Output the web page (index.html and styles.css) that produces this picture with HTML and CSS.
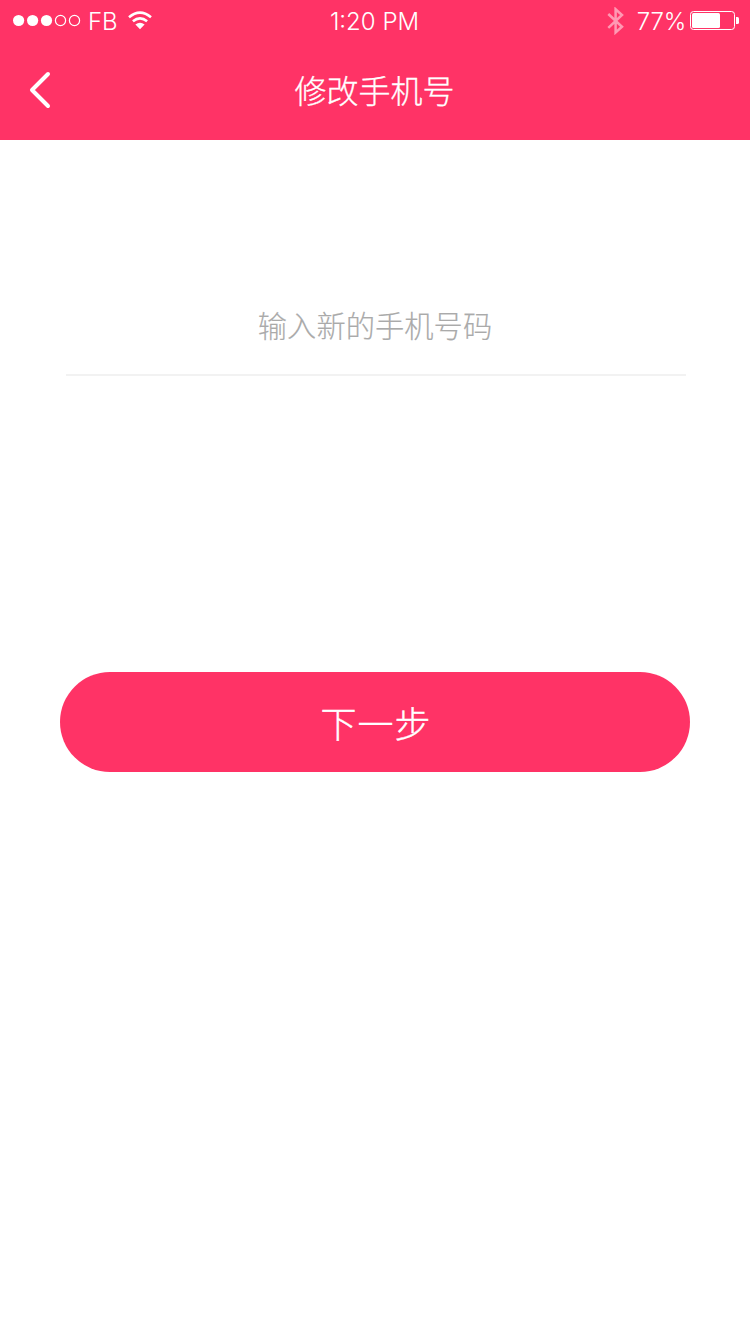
FILE: index.html
```html
<!DOCTYPE html>
<html lang="zh-CN">
<head>
<meta charset="utf-8">
<title>修改手机号</title>
<link rel="stylesheet" href="styles.css">
</head>
<body>
<header class="header">
  <div class="status">
    <div class="status-left">
      <svg class="signal" width="68" height="13" viewBox="0 0 68 13">
        <g fill="#fff"><circle cx="5.6" cy="6.5" r="5.6"/><circle cx="19.6" cy="6.5" r="5.6"/><circle cx="33.5" cy="6.5" r="5.6"/></g>
        <g fill="none" stroke="#fff" stroke-width="1.2"><circle cx="47.5" cy="6.5" r="5.1"/><circle cx="61.5" cy="6.5" r="5.1"/></g>
      </svg>
      <span class="carrier">FB</span>
      <svg class="wifi" width="24" height="19" viewBox="0 0 24 19">
        <g fill="none" stroke="#fff" stroke-width="2.6"><path d="M1 6.3Q12 -2.9 23 6.3"/><path d="M4.9 10.3Q12 4.4 19.1 10.3"/></g>
        <path fill="#fff" d="M7.4 13.5Q12 9.8 16.6 13.5L12 18.3Z"/>
      </svg>
    </div>
    <span class="time">1:20 PM</span>
    <div class="status-right">
      <svg class="bluetooth" width="18" height="28" viewBox="0 0 18 28">
        <path d="M1.3 7 15 19.8 8.6 25.5V2.2L15 8 1.3 20.8" fill="none" stroke="#ff99b3" stroke-width="2.5"/>
      </svg>
      <span class="percent">77%</span>
      <svg class="battery" width="50" height="20" viewBox="0 0 50 20">
        <rect x=".5" y=".5" width="44" height="18" rx="3" fill="none" stroke="#fff"/>
        <rect x="2" y="2" width="28" height="15" rx="1.5" fill="#fff"/>
        <path d="M46 6h1.5q1.5 0 1.5 1.5v4q0 1.5-1.5 1.5H46z" fill="#fff"/>
      </svg>
    </div>
  </div>
  <nav class="nav">
    <a class="back" aria-label="返回">
      <svg width="24" height="40" viewBox="0 0 24 40"><path d="M20 4 4 20l16 16" fill="none" stroke="#fff" stroke-width="4" stroke-linecap="round" stroke-linejoin="round"/></svg>
    </a>
    <h1 class="title">修改手机号</h1>
  </nav>
</header>
<main class="form">
  <div class="field">输入新的手机号码</div>
  <button class="next" type="button">下一步</button>
</main>
</body>
</html>
```
FILE: styles.css
```css
* { box-sizing: border-box; }
body {
  margin: 0;
  min-height: 1334px;
  background: #fff;
  font-family: "Noto Sans CJK SC", sans-serif;
}
.header {
  height: 140px;
  background: #ff3366;
  color: #fff;
}
.status {
  display: grid;
  grid-template-columns: 1fr auto 1fr;
  height: 40px;
  padding: 0 10px 0 13px;
  font-family: Inter, sans-serif;
  font-size: 24px;
  font-weight: 300;
  line-height: 44px;
}
.status-left, .status-right { display: flex; align-items: flex-start; }
.status-right { justify-content: flex-end; }
.signal { margin-top: 14px; }
.carrier { margin-left: 7px; width: 30px; letter-spacing: -0.2px; }
.time { margin-left: -4px; }
.wifi { margin: 11px 0 0 10px; }
.bluetooth { margin-top: 7px; }
.percent { margin: 0 4px 0 12px; letter-spacing: -0.2px; }
.battery { margin-top: 11px; }
.nav {
  display: grid;
  grid-template-columns: 80px 1fr 80px;
  align-items: center;
  height: 100px;
}
.back { display: flex; padding-left: 28px; }
.title {
  margin: 0;
  padding: 0 1px 2px 0;
  font-size: 32px;
  font-weight: 300;
  line-height: 48px;
  text-align: center;
  -webkit-text-stroke: 0.3px currentColor;
}
.form { padding: 137px 60px 0; }
.field {
  height: 99px;
  margin: 0 4px 0 6px;
  padding: 25px 2px 0 0;
  border-bottom: 2px solid #f2f2f2;
  color: #aaa;
  font-size: 29.3px;
  font-weight: 200;
  line-height: 44px;
  text-align: center;
  -webkit-text-stroke: 0.15px currentColor;
}
.next {
  display: block;
  width: 630px;
  height: 100px;
  margin-top: 296px;
  padding: 0 0 0 2px;
  border: 0;
  border-radius: 50px;
  background: #ff3366;
  color: #fff;
  font-family: inherit;
  font-size: 36px;
  font-weight: 300;
  letter-spacing: 1px;
  line-height: 100px;
  -webkit-text-stroke: 0.4px currentColor;
}
```
